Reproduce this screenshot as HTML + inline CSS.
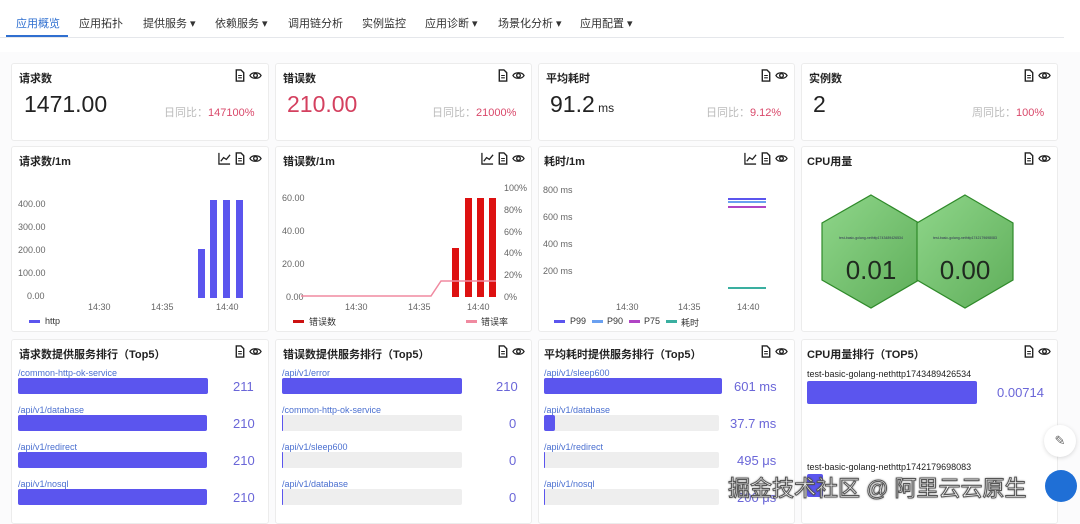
<!DOCTYPE html>
<html><head><meta charset="utf-8"><style>
*{margin:0;padding:0;box-sizing:border-box}
body{width:1080px;height:516px;overflow:hidden;background:#fbfbfc;font-family:"Liberation Sans","Noto Sans CJK SC",sans-serif;color:#333;position:relative}
.top{position:absolute;left:0;top:0;width:1080px;height:52px;background:#fff}
.tabs{position:absolute;left:0;top:15px;height:24px;font-size:11px;color:#333}
.tabs span{position:absolute;top:0;white-space:nowrap}
.tabline{position:absolute;left:0;top:37px;width:1064px;height:1px;background:#e5e7eb}
.card{position:absolute;background:#fff;border:1px solid #ececec;border-radius:3px;overflow:hidden}
.t{position:absolute;left:7px;top:6px;font-size:11px;font-weight:bold;color:#222;white-space:nowrap}
.ic{position:absolute;top:5px;right:6px;display:flex;gap:3px}
.a{position:absolute;white-space:nowrap}
.ax{font-size:9px;color:#666}
.bl{font-size:9px;color:#4a6fd0}
.bar{position:absolute;height:16px;border-radius:2px;background:#eee}
.bf{position:absolute;left:0;top:0;height:16px;border-radius:2px;background:#5b55ee}
.v{font-size:13px;color:#6a66d8}
</style></head><body>
<div class="top"></div>
<div class="tabs">
<span style="left:16px;color:#2f6fd0">应用概览</span>
<span style="left:79px">应用拓扑</span>
<span style="left:143px">提供服务 ▾</span>
<span style="left:215px">依赖服务 ▾</span>
<span style="left:288px">调用链分析</span>
<span style="left:362px">实例监控</span>
<span style="left:425px">应用诊断 ▾</span>
<span style="left:498px">场景化分析 ▾</span>
<span style="left:580px">应用配置 ▾</span>
</div>
<div style="position:absolute;left:6px;top:35px;width:62px;height:2px;background:#2f6fd0"></div>
<div class="tabline"></div>

<svg width="0" height="0" style="position:absolute"><defs>
<symbol id="doc" viewBox="0 0 12 14"><path d="M2 1h5l3 3v9H2z" fill="none" stroke="#222" stroke-width="1.5"/><path d="M4 7h4M4 9.5h4" stroke="#222" stroke-width="1.2"/></symbol>
<symbol id="eye" viewBox="0 0 14 14"><path d="M1 7c2-4 10-4 12 0c-2 4-10 4-12 0z" fill="none" stroke="#222" stroke-width="1.4"/><circle cx="7" cy="7" r="2" fill="none" stroke="#222" stroke-width="1.4"/></symbol>
<symbol id="chart" viewBox="0 0 14 14"><path d="M1 1v12h12" fill="none" stroke="#222" stroke-width="1.4"/><path d="M3 10l3-4 3 2 4-5" fill="none" stroke="#222" stroke-width="1.4"/></symbol>
</defs></svg>

<!-- Row 1 -->
<div class="card" style="left:11px;top:63px;width:258px;height:78px">
<div class="t">请求数</div><div class="ic"><svg width="12" height="13"><use href="#doc"/></svg><svg width="13" height="13"><use href="#eye"/></svg></div>
<div class="a" style="left:12px;top:27px;font-size:23px;color:#222">1471.00</div>
<div class="a" style="left:152px;top:40px;font-size:11px;color:#bbb">日同比：<span style="color:#d9486a">147100%</span></div>
</div>
<div class="card" style="left:275px;top:63px;width:257px;height:78px">
<div class="t">错误数</div><div class="ic"><svg width="12" height="13"><use href="#doc"/></svg><svg width="13" height="13"><use href="#eye"/></svg></div>
<div class="a" style="left:11px;top:27px;font-size:23px;color:#d4405f">210.00</div>
<div class="a" style="left:156px;top:40px;font-size:11px;color:#bbb">日同比：<span style="color:#d9486a">21000%</span></div>
</div>
<div class="card" style="left:538px;top:63px;width:257px;height:78px">
<div class="t">平均耗时</div><div class="ic"><svg width="12" height="13"><use href="#doc"/></svg><svg width="13" height="13"><use href="#eye"/></svg></div>
<div class="a" style="left:11px;top:27px;font-size:23px;color:#222">91.2<span style="font-size:12px"> ms</span></div>
<div class="a" style="left:167px;top:40px;font-size:11px;color:#bbb">日同比：<span style="color:#d9486a">9.12%</span></div>
</div>
<div class="card" style="left:801px;top:63px;width:257px;height:78px">
<div class="t">实例数</div><div class="ic"><svg width="12" height="13"><use href="#doc"/></svg><svg width="13" height="13"><use href="#eye"/></svg></div>
<div class="a" style="left:11px;top:27px;font-size:23px;color:#222">2</div>
<div class="a" style="left:170px;top:40px;font-size:11px;color:#bbb">周同比：<span style="color:#d9486a">100%</span></div>
</div>

<!-- Row 2 -->
<div class="card" style="left:11px;top:146px;width:258px;height:186px">
<div class="t">请求数/1m</div><div class="ic"><svg width="13" height="13"><use href="#chart"/></svg><svg width="12" height="13"><use href="#doc"/></svg><svg width="13" height="13"><use href="#eye"/></svg></div>
<div class="a ax" style="left:6px;top:52px">400.00</div>
<div class="a ax" style="left:6px;top:75px">300.00</div>
<div class="a ax" style="left:6px;top:98px">200.00</div>
<div class="a ax" style="left:6px;top:121px">100.00</div>
<div class="a ax" style="left:15px;top:144px">0.00</div>
<div style="position:absolute;left:186px;top:102px;width:7px;height:49px;background:#5b55ee"></div>
<div style="position:absolute;left:198px;top:53px;width:7px;height:98px;background:#5b55ee"></div>
<div style="position:absolute;left:211px;top:53px;width:7px;height:98px;background:#5b55ee"></div>
<div style="position:absolute;left:224px;top:53px;width:7px;height:98px;background:#5b55ee"></div>
<div class="a ax" style="left:76px;top:155px">14:30</div>
<div class="a ax" style="left:139px;top:155px">14:35</div>
<div class="a ax" style="left:204px;top:155px">14:40</div>
<div style="position:absolute;left:17px;top:173px;width:11px;height:3px;background:#5b55ee"></div>
<div class="a ax" style="left:33px;top:169px;color:#333">http</div>
</div>

<div class="card" style="left:275px;top:146px;width:257px;height:186px">
<div class="t">错误数/1m</div><div class="ic"><svg width="13" height="13"><use href="#chart"/></svg><svg width="12" height="13"><use href="#doc"/></svg><svg width="13" height="13"><use href="#eye"/></svg></div>
<div class="a ax" style="left:6px;top:46px">60.00</div>
<div class="a ax" style="left:6px;top:79px">40.00</div>
<div class="a ax" style="left:6px;top:112px">20.00</div>
<div class="a ax" style="left:10px;top:145px">0.00</div>
<div class="a ax" style="left:228px;top:36px">100%</div>
<div class="a ax" style="left:228px;top:58px">80%</div>
<div class="a ax" style="left:228px;top:80px">60%</div>
<div class="a ax" style="left:228px;top:101px">40%</div>
<div class="a ax" style="left:228px;top:123px">20%</div>
<div class="a ax" style="left:228px;top:145px">0%</div>
<div style="position:absolute;left:176px;top:101px;width:7px;height:49px;background:#dd1111"></div>
<div style="position:absolute;left:189px;top:51px;width:7px;height:99px;background:#dd1111"></div>
<div style="position:absolute;left:201px;top:51px;width:7px;height:99px;background:#dd1111"></div>
<div style="position:absolute;left:213px;top:51px;width:7px;height:99px;background:#dd1111"></div>
<svg style="position:absolute;left:0;top:0" width="257" height="186"><polyline points="25,149 155,149 165,134 220,134" fill="none" stroke="#f08aa0" stroke-width="1.5"/></svg>
<div class="a ax" style="left:69px;top:155px">14:30</div>
<div class="a ax" style="left:132px;top:155px">14:35</div>
<div class="a ax" style="left:191px;top:155px">14:40</div>
<div style="position:absolute;left:17px;top:173px;width:11px;height:3px;background:#cc1111"></div>
<div class="a ax" style="left:33px;top:168px;color:#333">错误数</div>
<div style="position:absolute;left:190px;top:173px;width:11px;height:3px;background:#f08aa0"></div>
<div class="a ax" style="left:205px;top:168px;color:#333">错误率</div>
</div>

<div class="card" style="left:538px;top:146px;width:257px;height:186px">
<div class="t" style="left:5px">耗时/1m</div><div class="ic"><svg width="13" height="13"><use href="#chart"/></svg><svg width="12" height="13"><use href="#doc"/></svg><svg width="13" height="13"><use href="#eye"/></svg></div>
<div class="a ax" style="left:4px;top:38px">800 ms</div>
<div class="a ax" style="left:4px;top:65px">600 ms</div>
<div class="a ax" style="left:4px;top:92px">400 ms</div>
<div class="a ax" style="left:4px;top:119px">200 ms</div>
<div style="position:absolute;left:189px;top:51px;width:38px;height:2px;background:#5b55ee"></div>
<div style="position:absolute;left:189px;top:54px;width:38px;height:2px;background:#6aa0f0"></div>
<div style="position:absolute;left:189px;top:59px;width:38px;height:2px;background:#b044c4"></div>
<div style="position:absolute;left:189px;top:140px;width:38px;height:2px;background:#3aafa0"></div>
<div class="a ax" style="left:77px;top:155px">14:30</div>
<div class="a ax" style="left:139px;top:155px">14:35</div>
<div class="a ax" style="left:198px;top:155px">14:40</div>
<div style="position:absolute;left:15px;top:173px;width:11px;height:3px;background:#5b55ee"></div><div class="a ax" style="left:31px;top:169px;color:#333">P99</div>
<div style="position:absolute;left:53px;top:173px;width:11px;height:3px;background:#6aa0f0"></div><div class="a ax" style="left:68px;top:169px;color:#333">P90</div>
<div style="position:absolute;left:90px;top:173px;width:11px;height:3px;background:#b044c4"></div><div class="a ax" style="left:105px;top:169px;color:#333">P75</div>
<div style="position:absolute;left:127px;top:173px;width:11px;height:3px;background:#3aafa0"></div><div class="a ax" style="left:142px;top:169px;color:#333">耗时</div>
</div>

<div class="card" style="left:801px;top:146px;width:257px;height:186px">
<div class="t" style="left:5px">CPU用量</div><div class="ic"><svg width="12" height="13"><use href="#doc"/></svg><svg width="13" height="13"><use href="#eye"/></svg></div>
<svg style="position:absolute;left:0;top:0" width="257" height="186">
<defs><linearGradient id="g" x1="0" y1="0" x2="1" y2="1"><stop offset="0" stop-color="#8fd68a"/><stop offset="1" stop-color="#5fae5a"/></linearGradient></defs>
<polygon points="69,48 117,76 117,133 69,161 20,133 20,76" fill="url(#g)" stroke="#2f8a2a" stroke-width="1.2"/>
<polygon points="163,48 211,76 211,133 163,161 115,133 115,76" fill="url(#g)" stroke="#2f8a2a" stroke-width="1.2"/>
<text x="69" y="92" font-size="3.5" text-anchor="middle" fill="#335">test-basic-golang-nethttp1743489426534</text>
<text x="163" y="92" font-size="3.5" text-anchor="middle" fill="#335">test-basic-golang-nethttp1742179698083</text>
<text x="69" y="132" font-size="26" text-anchor="middle" fill="#1f2a1f" font-family="Liberation Sans">0.01</text>
<text x="163" y="132" font-size="26" text-anchor="middle" fill="#1f2a1f" font-family="Liberation Sans">0.00</text>
</svg>
</div>

<!-- Row 3 -->
<div class="card" style="left:11px;top:339px;width:258px;height:185px">
<div class="t">请求数提供服务排行（Top5）</div><div class="ic"><svg width="12" height="13"><use href="#doc"/></svg><svg width="13" height="13"><use href="#eye"/></svg></div>
<div class="a bl" style="left:6px;top:28px">/common-http-ok-service</div><div class="bar" style="left:6px;top:38px;width:190px"><div class="bf" style="width:190px"></div></div><div class="a v" style="left:221px;top:39px">211</div>
<div class="a bl" style="left:6px;top:65px">/api/v1/database</div><div class="bar" style="left:6px;top:75px;width:189px"><div class="bf" style="width:189px"></div></div><div class="a v" style="left:221px;top:76px">210</div>
<div class="a bl" style="left:6px;top:102px">/api/v1/redirect</div><div class="bar" style="left:6px;top:112px;width:189px"><div class="bf" style="width:189px"></div></div><div class="a v" style="left:221px;top:113px">210</div>
<div class="a bl" style="left:6px;top:139px">/api/v1/nosql</div><div class="bar" style="left:6px;top:149px;width:189px"><div class="bf" style="width:189px"></div></div><div class="a v" style="left:221px;top:150px">210</div>
</div>

<div class="card" style="left:275px;top:339px;width:257px;height:185px">
<div class="t">错误数提供服务排行（Top5）</div><div class="ic"><svg width="12" height="13"><use href="#doc"/></svg><svg width="13" height="13"><use href="#eye"/></svg></div>
<div class="a bl" style="left:6px;top:28px">/api/v1/error</div><div class="bar" style="left:6px;top:38px;width:180px"><div class="bf" style="width:180px"></div></div><div class="a v" style="left:220px;top:39px">210</div>
<div class="a bl" style="left:6px;top:65px">/common-http-ok-service</div><div class="bar" style="left:6px;top:75px;width:180px"><div class="bf" style="width:1px"></div></div><div class="a v" style="left:233px;top:76px">0</div>
<div class="a bl" style="left:6px;top:102px">/api/v1/sleep600</div><div class="bar" style="left:6px;top:112px;width:180px"><div class="bf" style="width:1px"></div></div><div class="a v" style="left:233px;top:113px">0</div>
<div class="a bl" style="left:6px;top:139px">/api/v1/database</div><div class="bar" style="left:6px;top:149px;width:180px"><div class="bf" style="width:1px"></div></div><div class="a v" style="left:233px;top:150px">0</div>
</div>

<div class="card" style="left:538px;top:339px;width:257px;height:185px">
<div class="t" style="left:5px">平均耗时提供服务排行（Top5）</div><div class="ic"><svg width="12" height="13"><use href="#doc"/></svg><svg width="13" height="13"><use href="#eye"/></svg></div>
<div class="a bl" style="left:5px;top:28px">/api/v1/sleep600</div><div class="bar" style="left:5px;top:38px;width:178px"><div class="bf" style="width:178px"></div></div><div class="a v" style="left:195px;top:39px">601 ms</div>
<div class="a bl" style="left:5px;top:65px">/api/v1/database</div><div class="bar" style="left:5px;top:75px;width:175px"><div class="bf" style="width:11px"></div></div><div class="a v" style="left:191px;top:76px">37.7 ms</div>
<div class="a bl" style="left:5px;top:102px">/api/v1/redirect</div><div class="bar" style="left:5px;top:112px;width:175px"><div class="bf" style="width:1px"></div></div><div class="a v" style="left:198px;top:113px">495 μs</div>
<div class="a bl" style="left:5px;top:139px">/api/v1/nosql</div><div class="bar" style="left:5px;top:149px;width:175px"><div class="bf" style="width:1px"></div></div><div class="a v" style="left:198px;top:150px">200 μs</div>
</div>

<div class="card" style="left:801px;top:339px;width:257px;height:185px">
<div class="t" style="left:5px">CPU用量排行（TOP5）</div><div class="ic"><svg width="12" height="13"><use href="#doc"/></svg><svg width="13" height="13"><use href="#eye"/></svg></div>
<div class="a" style="left:5px;top:29px;font-size:9px;color:#222">test-basic-golang-nethttp1743489426534</div>
<div class="bar" style="left:5px;top:41px;width:170px;height:23px"><div class="bf" style="width:170px;height:23px"></div></div><div class="a v" style="left:195px;top:45px">0.00714</div>
<div class="a" style="left:5px;top:122px;font-size:9px;color:#222">test-basic-golang-nethttp1742179698083</div>
<div class="bar" style="left:5px;top:134px;width:170px;height:23px;background:#fff"><div class="bf" style="width:16px;height:23px"></div></div>
</div>

<div style="position:absolute;left:1044px;top:425px;width:32px;height:32px;border-radius:16px;background:#fff;box-shadow:0 1px 4px rgba(0,0,0,.15);font-size:13px;color:#666;text-align:center;line-height:32px">✎</div>
<div style="position:absolute;left:1045px;top:470px;width:32px;height:32px;border-radius:16px;background:#1f6fd6"></div>
<div class="a" style="left:728px;top:471px;font-size:22px;color:#fff;-webkit-text-stroke:1px #555;text-shadow:0 0 2px #333">掘金技术社区 @ 阿里云云原生</div>
</body></html>
